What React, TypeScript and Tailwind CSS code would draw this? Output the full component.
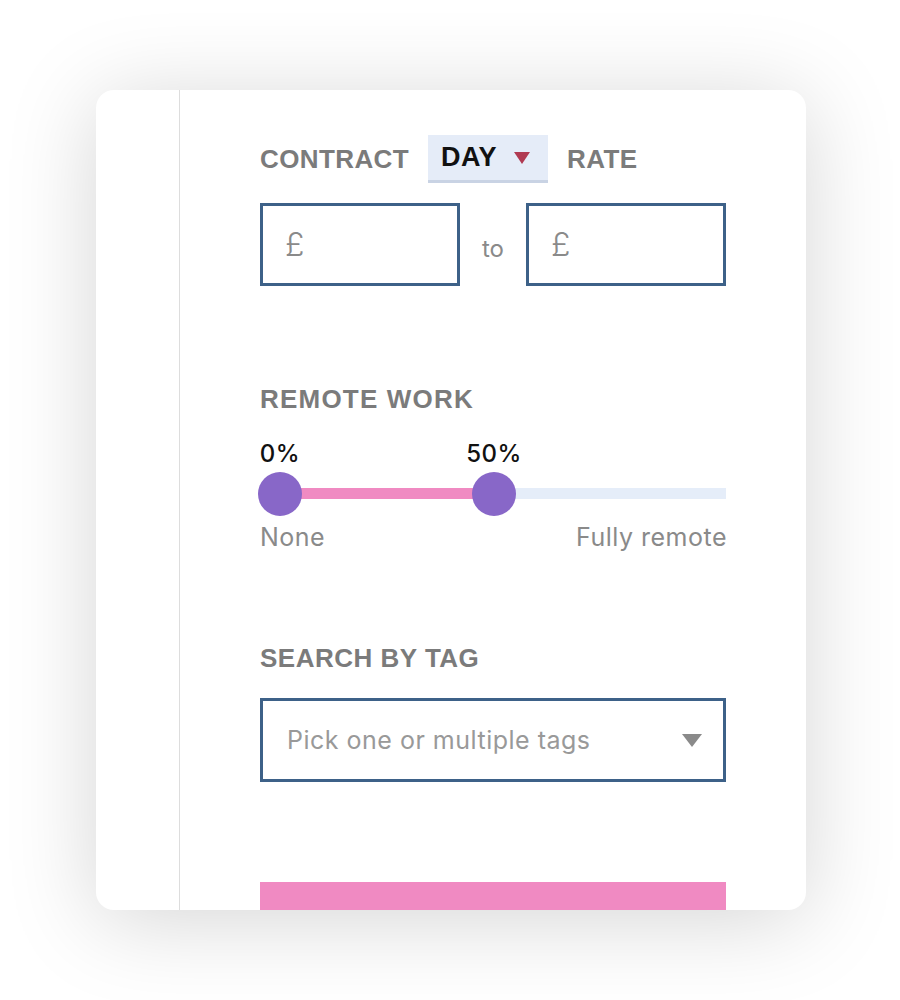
export default function App() {
  const heading = "font-['Liberation_Sans',Arial,sans-serif] font-bold text-[#7b7b7b]";
  const body = "font-['Inter','Noto_Sans',sans-serif]";

  return (
    <div className="w-[900px] h-[1000px] bg-white pt-[90px] pl-[96px]">
      <div className="w-[710px] h-[820px] rounded-[18px] overflow-hidden flex bg-white shadow-[0_10px_90px_rgba(0,0,0,0.17)]">
        {/* Side rail */}
        <div className="w-[84px] shrink-0 border-r border-[#dddddd]" />

        {/* Filters */}
        <div className="pl-[80px] pt-[45px] w-[546px]">
          {/* Contract rate */}
          <div className="flex items-center h-[48px]">
            <span className={`${heading} text-[26px] leading-none tracking-[0.4px]`}>CONTRACT</span>
            <div className="ml-[19px] h-[48px] flex items-center pl-[13px] pr-[18px] bg-[#e5ecf8] border-b-[3px] border-[#c9d3e4]">
              <span className="font-['Liberation_Sans',Arial,sans-serif] font-bold text-[27px] leading-none text-[#111111] tracking-[0.5px]">DAY</span>
              <svg width="16" height="12" viewBox="0 0 16 12" className="ml-[17px]">
                <path d="M0 0 H16 L8 12 Z" fill="#b03a52" />
              </svg>
            </div>
            <span className={`${heading} text-[26px] leading-none tracking-[0.4px] ml-[19px]`}>RATE</span>
          </div>

          <div className="mt-[20px] flex items-center justify-between w-[466px]">
            <div className="w-[200px] h-[83px] border-[3px] border-[#3d6188] flex items-center pl-[22px]">
              <span className={`${body} font-light text-[32px] text-[#8a8a8a] leading-none`}>£</span>
            </div>
            <span className={`${body} text-[24px] text-[#8a8a8a] leading-none pt-[9px]`}>to</span>
            <div className="w-[200px] h-[83px] border-[3px] border-[#3d6188] flex items-center pl-[22px]">
              <span className={`${body} font-light text-[32px] text-[#8a8a8a] leading-none`}>£</span>
            </div>
          </div>

          {/* Remote work */}
          <div className={`${heading} mt-[100px] text-[26px] leading-none h-[26px] tracking-[1.2px]`}>REMOTE WORK</div>

          <div className="w-[466px] mt-[30px]">
            <div className={`${body} relative h-[24px] text-[24px] leading-none font-medium text-[#111111] tracking-[0.5px]`}>
              <span className="absolute left-[20px] -translate-x-1/2">0%</span>
              <span className="absolute left-[234px] -translate-x-1/2">50%</span>
            </div>
            <div className="relative h-[44px] mt-[6px]">
              <div className="absolute left-[20px] right-0 top-[16px] h-[11px] bg-[#e5edf9]" />
              <div className="absolute left-[20px] w-[214px] top-[16px] h-[11px] bg-[#f08ac2]" />
              <div className="absolute left-[-2px] top-0 w-[44px] h-[44px] rounded-full bg-[#8867c8]" />
              <div className="absolute left-[212px] top-0 w-[44px] h-[44px] rounded-full bg-[#8867c8]" />
            </div>
            <div className={`${body} mt-[9px] flex justify-between text-[25px] leading-none text-[#8a8a8a] tracking-[0.5px]`}>
              <span>None</span>
              <span className="mr-[-1px]">Fully remote</span>
            </div>
          </div>

          {/* Tags */}
          <div className={`${heading} mt-[95px] text-[26px] leading-none h-[26px] tracking-[0.5px]`}>SEARCH BY TAG</div>

          <div className="mt-[27px] w-[466px] h-[84px] border-[3px] border-[#3d6188] flex items-center justify-between pl-[24px] pr-[21px]">
            <span className={`${body} text-[25px] text-[#999999] leading-none tracking-[0.5px]`}>Pick one or multiple tags</span>
            <svg width="20" height="13" viewBox="0 0 20 13">
              <path d="M0 0 H20 L10 13 Z" fill="#8a8a8a" />
            </svg>
          </div>

          <div className="mt-[100px] w-[466px] h-[60px] bg-[#f08ac2]" />
        </div>
      </div>
    </div>
  );
}
